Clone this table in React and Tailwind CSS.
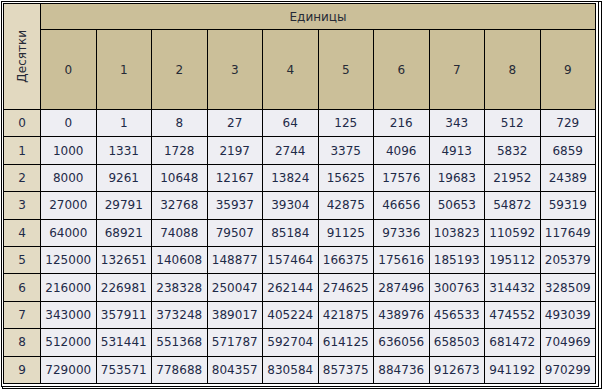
const units = [0, 1, 2, 3, 4, 5, 6, 7, 8, 9];
const tens = [0, 1, 2, 3, 4, 5, 6, 7, 8, 9];

export default function App() {
  return (
    <div
      className="w-[602px] h-[389px] bg-white pl-[1px] pt-[1px] text-[12px] text-[#1e2a48]"
      style={{ fontFamily: '"DejaVu Sans", Verdana, sans-serif' }}
    >
      <div className="w-[598px] h-[386px] border border-black pl-[1px] pt-[1px] pr-[2px] pb-[2px] shadow-[2px_1px_0_0_#fff,2px_1px_0_1px_#000]">
        <div className="h-full border border-black bg-black grid grid-cols-[36px_repeat(10,1fr)] grid-rows-[25px_79px_repeat(10,1fr)] gap-px">
          <div className="row-span-2 bg-[#e2d9c0] flex items-center justify-center">
            <span className="[writing-mode:vertical-rl] rotate-180 text-[#262a36]">
              Десятки
            </span>
          </div>
          <div className="col-span-10 bg-[#cbbf99] flex items-center justify-center text-[#262a36]">
            Единицы
          </div>
          {units.map((u) => (
            <div
              key={u}
              className="bg-[#cbbf99] flex items-center justify-center text-[#262a36]"
            >
              {u}
            </div>
          ))}
          {tens.map((t) => (
            <Row key={t} t={t} />
          ))}
        </div>
      </div>
    </div>
  );
}

function Row({ t }) {
  return (
    <>
      <div className="bg-[#e3dbc4] flex items-center justify-center">{t}</div>
      {units.map((u) => {
        const n = t * 10 + u;
        return (
          <div
            key={u}
            className="bg-[#eeeef3] flex items-center justify-center"
          >
            {n * n * n}
          </div>
        );
      })}
    </>
  );
}
